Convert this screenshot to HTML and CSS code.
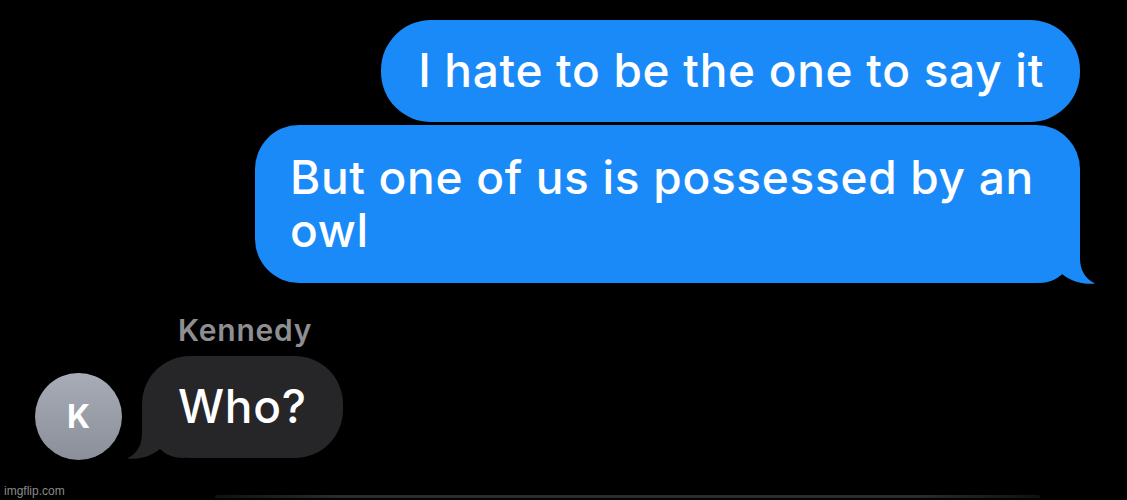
FILE: index.html
```html
<!DOCTYPE html>
<html>
<head>
<meta charset="utf-8">
<link rel="stylesheet" href="styles.css">
</head>
<body>
<div class="chat">
  <div class="sent-group">
    <div class="bubble sent first">I hate to be the one to say it</div>
    <div class="bubble sent last">But one of us is possessed by an owl
      <svg class="tail tail-right" width="60" height="44" viewBox="0 0 60 44"><path d="M42 0 L42 18 C42 30 47 39 57 43.5 C48 45 33 42 24 34 C18 40 10 43 0 43 L0 0 Z" fill="#1b8af9"/></svg>
    </div>
  </div>
  <div class="received-group">
    <div class="sender">Kennedy</div>
    <div class="received-row">
      <div class="avatar">K</div>
      <div class="bubble received">Who?
        <svg class="tail tail-left" width="60" height="44" viewBox="0 0 60 44"><path d="M18 0 L18 18 C18 30 13 39 3 43.5 C12 45 27 42 36 34 C42 40 50 43 60 43 L60 0 Z" fill="#262628"/></svg>
      </div>
    </div>
  </div>
  <div class="next-edge"></div>
</div>
<div class="watermark">imgflip.com</div>
</body>
</html>
```

FILE: styles.css
```css
html, body {
  margin: 0;
  padding: 0;
  background: #000;
  width: 1127px;
  height: 500px;
  overflow: hidden;
}

body {
  position: relative;
  font-family: Inter, "Open Sans", "Liberation Sans", sans-serif;
}

.chat {
  display: flex;
  flex-direction: column;
  padding-top: 20px;
}

.sent-group {
  display: flex;
  flex-direction: column;
  align-items: flex-end;
  gap: 3px;
  padding-right: 47px;
}

.bubble {
  position: relative;
  color: #fff;
  font-size: 46px;
  line-height: 53px;
  letter-spacing: 0.7px;
  font-weight: 500;
  box-sizing: border-box;
}

.sent {
  background: #1b8af9;
  border-radius: 50px;
  padding: 24px 36px 25px 37px;
}

.sent.last {
  max-width: 825px;
  padding: 26px 36px 26px 35px;
  border-radius: 44px;
}

.tail {
  position: absolute;
  bottom: -1px;
}

.tail-right {
  right: -18px;
}

.tail-left {
  left: -18px;
}

.received-group {
  display: flex;
  flex-direction: column;
  padding-left: 35px;
  margin-top: 32px;
}

.sender {
  margin-left: 143px;
  color: #8e8e93;
  font-size: 30px;
  line-height: 30px;
  font-weight: 600;
  letter-spacing: 0.8px;
}

.received-row {
  display: flex;
  align-items: flex-end;
  gap: 20px;
  margin-top: 11px;
}

.avatar {
  width: 87px;
  height: 87px;
  border-radius: 50%;
  background: linear-gradient(180deg, #a8acb6 0%, #8b8f99 100%);
  color: #fff;
  font-weight: 700;
  font-size: 32px;
  display: flex;
  align-items: center;
  justify-content: center;
  margin-bottom: -2px;
}

.received {
  background: #262628;
  border-radius: 48px;
  padding: 24px 36px 25px 36px;
}

.next-edge {
  margin-top: 37px;
  margin-left: 215px;
  width: 825px;
  height: 3px;
  border-radius: 2px 2px 0 0;
  background: linear-gradient(90deg, #111 0%, #2c2c2e 15%, #2c2c2e 85%, #111 100%);
}

.watermark {
  position: absolute;
  left: 4px;
  bottom: 2px;
  font-family: "Liberation Sans", Arial, sans-serif;
  font-size: 12px;
  color: #8a8a8a;
}
```
